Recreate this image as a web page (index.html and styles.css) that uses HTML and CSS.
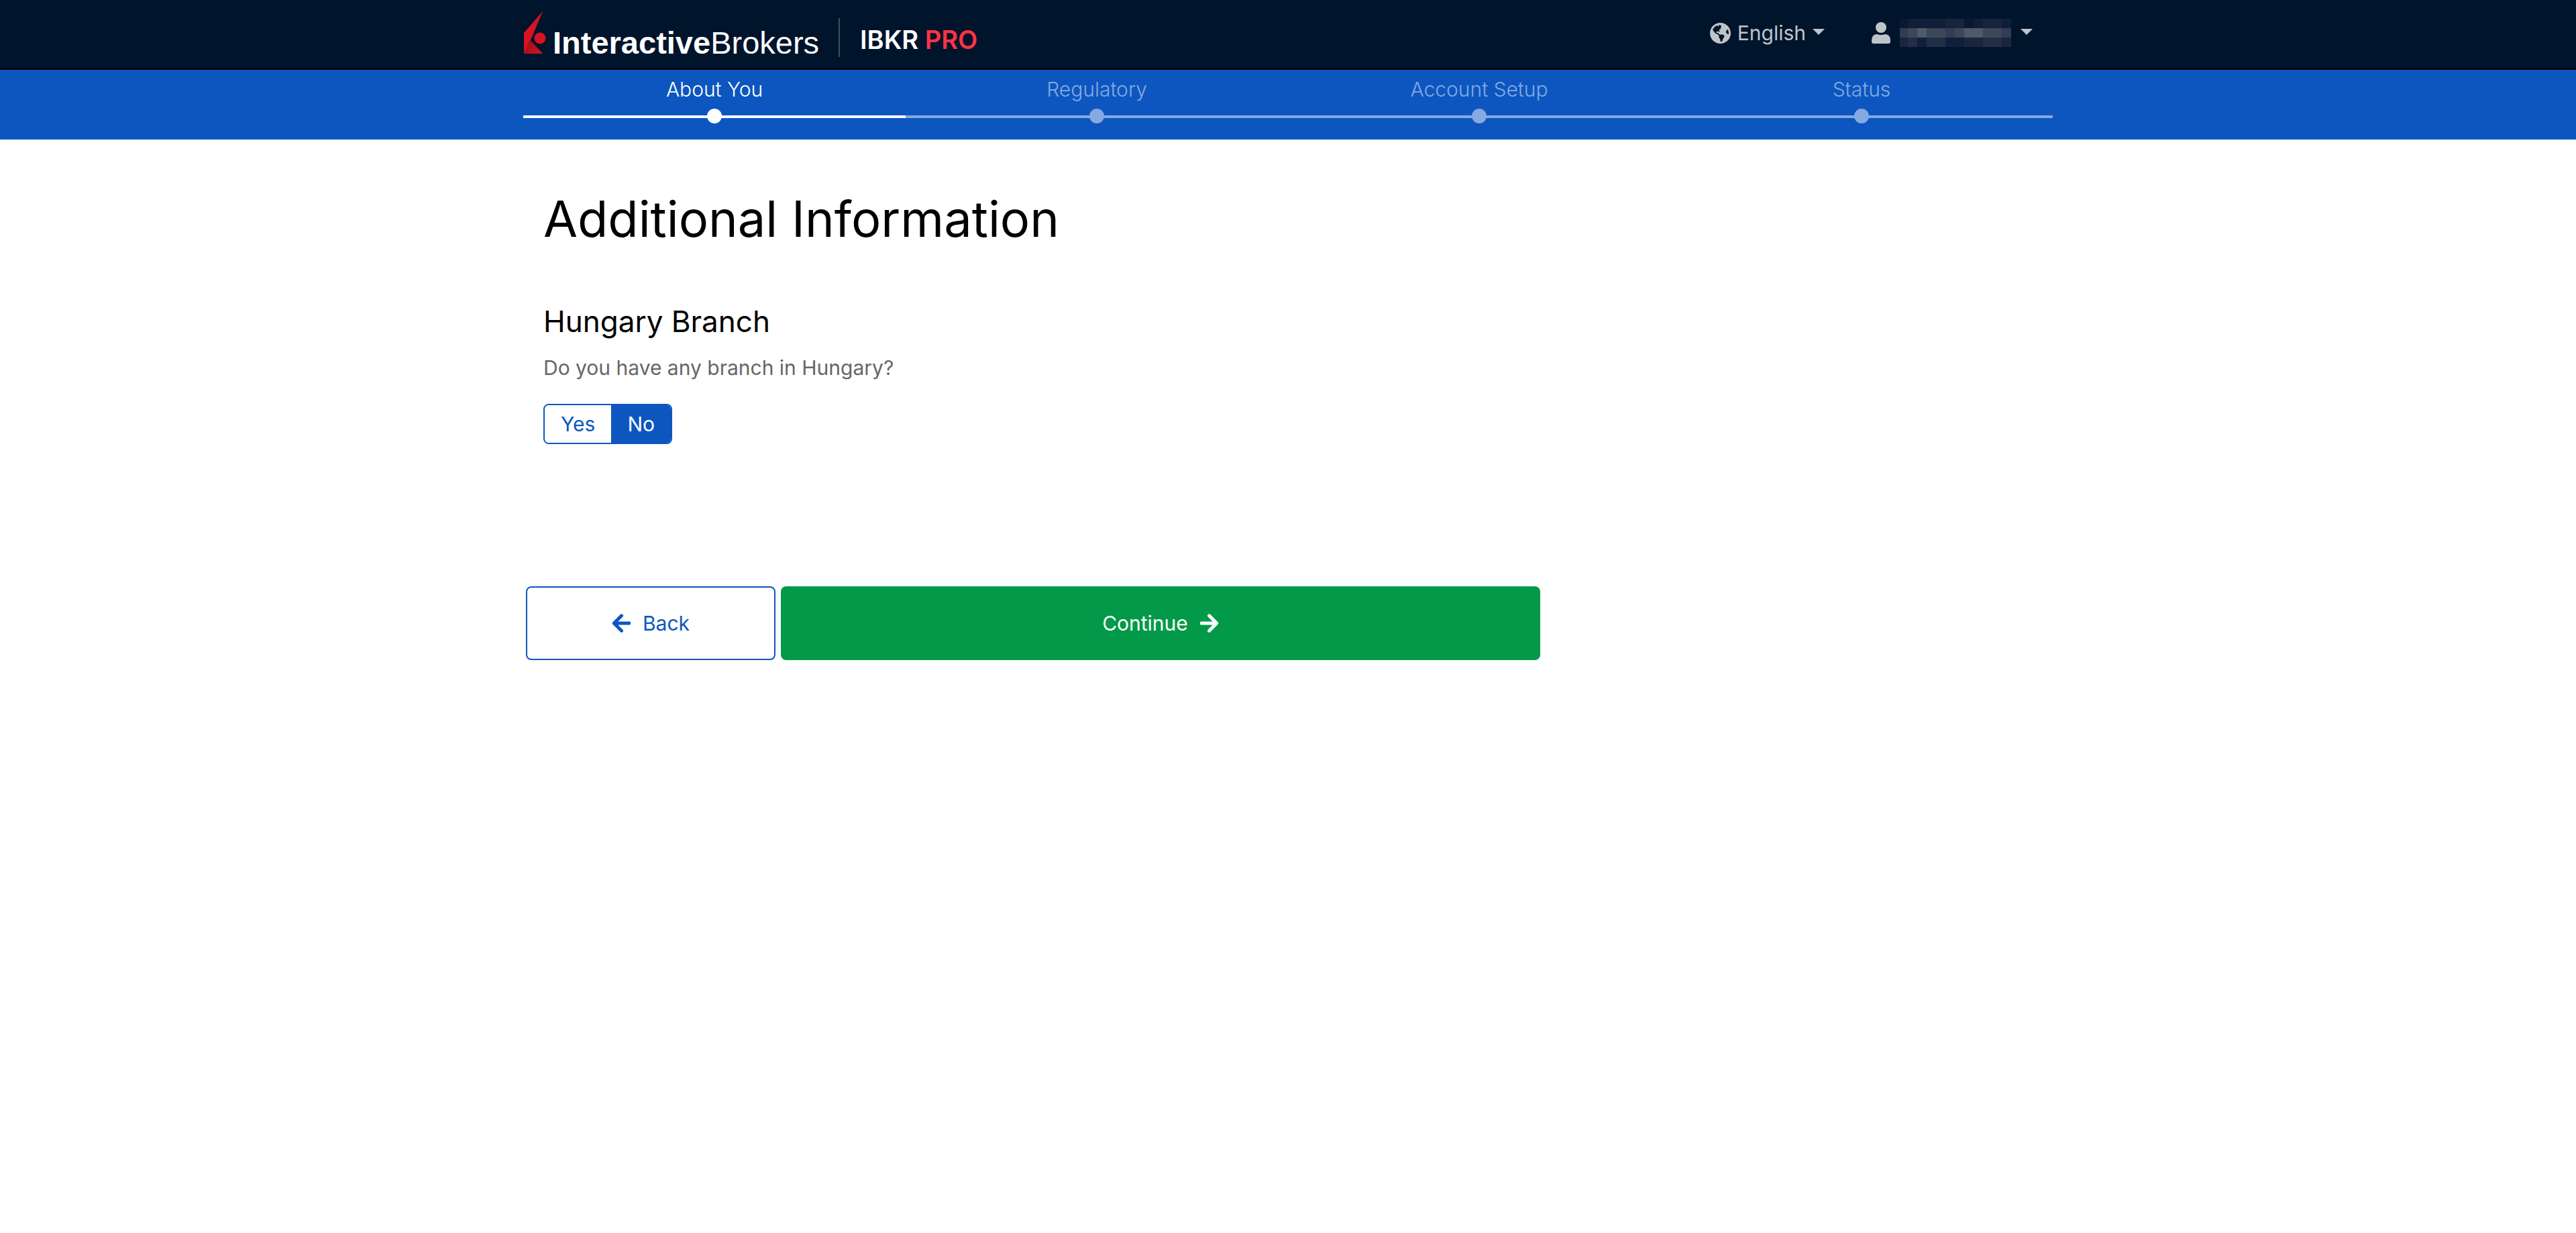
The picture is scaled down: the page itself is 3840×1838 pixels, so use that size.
FILE: index.html
```
<!DOCTYPE html>
<html lang="en">
<head>
<meta charset="utf-8">
<title>Additional Information</title>
<link rel="stylesheet" href="styles.css">
</head>
<body>
<header class="header">
  <div class="container header-row">
    <a class="logo" href="#" aria-label="InteractiveBrokers home">
      <svg class="logo-mark" viewBox="0 0 33 63" aria-hidden="true">
        <defs>
          <linearGradient id="fold" x1="0" y1="0" x2="1" y2="1">
            <stop offset="0" stop-color="#8d0f18"/>
            <stop offset="1" stop-color="#d81222"/>
          </linearGradient>
        </defs>
        <path d="M28 0 0 32v31l10-20z" fill="#d81222"/>
        <path d="M0 63 9 42l19 21z" fill="url(#fold)"/>
        <circle cx="24" cy="40" r="8.5" fill="#d81222"/>
      </svg>
      <span class="wordmark"><b>Interactive</b>Brokers</span>
    </a>
    <span class="product">IBKR <span class="product-tier">PRO</span></span>
    <nav class="menus" aria-label="Preferences">
      <button class="menu" type="button">
        <svg class="globe" viewBox="0 8 496 496" aria-hidden="true"><path fill="currentColor" d="M248 8C111.03 8 0 119.03 0 256s111.03 248 248 248 248-111.03 248-248S384.97 8 248 8zm82.29 357.6c-3.9 3.88-7.99 7.95-11.31 11.28-2.99 3-5.1 6.7-6.17 10.71-1.51 5.66-2.73 11.38-4.77 16.87l-17.39 46.85c-13.76 3-28 4.69-42.65 4.69v-27.38c1.69-12.62-7.64-36.26-22.63-51.25-6-6-9.37-14.14-9.37-22.63v-32.01c0-11.64-6.27-22.34-16.46-27.97-14.37-7.95-34.81-19.06-48.81-26.11-11.48-5.78-22.1-13.14-31.65-21.75l-.8-.72a114.792 114.792 0 0 1-18.06-20.74c-9.38-13.77-24.66-36.42-34.59-51.14 20.47-45.5 57.36-82.04 103.2-101.89l24.01 12.01C203.48 89.74 216 82.01 216 70.11v-11.3c7.99-1.29 16.12-2.11 24.39-2.42l28.3 28.3c6.25 6.25 6.25 16.38 0 22.63L264 112l-10.34 10.34c-3.12 3.12-3.12 8.19 0 11.31l4.69 4.69c3.12 3.12 3.12 8.19 0 11.31l-8 8a8.008 8.008 0 0 1-5.66 2.34h-8.99c-2.08 0-4.08.81-5.58 2.27l-9.92 9.65a8.008 8.008 0 0 0-1.58 9.31l15.59 31.19c2.66 5.32-1.21 11.58-7.15 11.58h-5.64c-1.93 0-3.79-.7-5.24-1.96l-9.28-8.06a16.017 16.017 0 0 0-15.55-3.1l-31.17 10.39a11.95 11.95 0 0 0-8.17 11.34c0 4.53 2.56 8.66 6.61 10.69l11.08 5.54c9.41 4.71 19.79 7.16 30.31 7.16s22.59 27.29 32 32h66.75c8.49 0 16.62 3.37 22.63 9.37l13.69 13.69a30.503 30.503 0 0 1 8.93 21.57 46.536 46.536 0 0 1-13.72 32.98zM417 274.25c-5.79-1.45-10.84-5-14.15-9.97l-17.98-26.97a23.97 23.97 0 0 1 0-26.62l19.59-29.38c2.32-3.47 5.5-6.29 9.24-8.15l12.98-6.49C440.2 193.59 448 223.87 448 256c0 8.67-.74 17.16-1.82 25.54L417 274.25z"/></svg>
        English
        <svg class="caret" viewBox="0 0 18 12" aria-hidden="true"><path d="M0 0h18L9 9z" fill="currentColor"/></svg>
      </button>
      <button class="menu menu-account" type="button" aria-label="Account">
        <svg class="person" viewBox="0 0 28 32" aria-hidden="true"><circle cx="14" cy="8" r="8" fill="currentColor"/><path d="M8 18q6 2 12 0 8 0 8 10v1q0 3-3 3H3q-3 0-3-3v-1q0-10 8-10z" fill="currentColor"/></svg>
        <svg class="masked" viewBox="0 0 166 42" shape-rendering="crispEdges" aria-hidden="true">
          <path fill="#101f39" d="M0 0h166v14H0z"/>
          <path fill="#18243d" d="M68 0h28v14H68zM124 0h28v14h-28z"/>
          <path fill="#0a1932" d="M0 0h12v14H0zM96 0h14v14H96z"/>
          <path fill="#3d475a" d="M0 14h166v14H0z"/>
          <path fill="#333c54" d="M0 14h12v14H0zM68 14h14v14H68zM152 14h14v14h-14z"/>
          <path fill="#4e596b" d="M26 14h14v14H26zM96 14h28v14H96z"/>
          <path fill="#1a263d" d="M0 28h166v14H0z"/>
          <path fill="#232e46" d="M12 28h14v14H12zM40 28h28v14H40zM124 28h28v14h-28z"/>
          <path fill="#10203a" d="M26 28h14v14H26zM68 28h28v14H68z"/>
        </svg>
        <svg class="caret" viewBox="0 0 18 12" aria-hidden="true"><path d="M0 0h18L9 9z" fill="currentColor"/></svg>
      </button>
    </nav>
  </div>
</header>

<nav class="progress" aria-label="Application progress">
  <ol class="container steps">
    <li class="step step-current" aria-current="step">About You<span class="track"></span></li>
    <li class="step">Regulatory<span class="track"></span></li>
    <li class="step">Account Setup<span class="track"></span></li>
    <li class="step">Status<span class="track"></span></li>
  </ol>
</nav>

<main class="container">
  <form class="form">
    <section class="content">
      <h1>Additional Information</h1>
      <h2>Hungary Branch</h2>
      <p class="question" id="branch-question">Do you have any branch in Hungary?</p>
      <div class="toggle" role="radiogroup" aria-labelledby="branch-question">
        <label class="option"><input type="radio" name="branch" value="yes">Yes</label>
        <label class="option"><input type="radio" name="branch" value="no" checked>No</label>
      </div>
    </section>
    <div class="actions">
      <button class="button button-back" type="button">
        <svg class="arrow" viewBox="0 0 28 28" aria-hidden="true"><path d="M14.500 2.800 3.300 14l11.200 11.200M4 14h22"/></svg>
        Back
      </button>
      <button class="button button-continue" type="submit">
        Continue
        <svg class="arrow" viewBox="0 0 28 28" aria-hidden="true"><path d="M13.500 2.800 24.700 14 13.500 25.200M24 14H2"/></svg>
      </button>
    </div>
  </form>
</main>
</body>
</html>
```
FILE: styles.css
```
* {
  box-sizing: border-box;
}

body {
  margin: 0;
  background: #fff;
  color: #000;
  font: 400 30px/36px Inter, "Liberation Sans", sans-serif;
}

h1,
h2,
p,
ol {
  margin: 0;
  padding: 0;
}

button {
  margin: 0;
  padding: 0;
  border: 0;
  background: none;
  color: inherit;
  font: inherit;
  cursor: pointer;
}

svg {
  display: block;
  flex: none;
}

.container {
  width: 100%;
  max-width: 2280px;
  margin: 0 auto;
}

/* Header */

.header {
  background: #00142b;
  border-bottom: 2px solid #000;
}

.header-row {
  display: flex;
  align-items: flex-start;
  padding: 17px 30px 15px 0;
}

.logo {
  display: flex;
  align-items: baseline;
  gap: 10px;
  height: 70px;
  color: #fff;
  text-decoration: none;
}

.logo-mark {
  width: 33px;
  height: 63px;
  margin-left: 1px;
}

.wordmark {
  font: 400 47px/46px "Liberation Sans", sans-serif;
}

.product {
  height: 58px;
  margin: 10px 0 0 29px;
  padding-left: 30px;
  border-left: 2px solid #404f60;
  color: #fff;
  font-size: 38px;
  font-weight: 600;
  line-height: 64px;
}

.product-tier {
  color: #ff3344;
}

.menus {
  display: flex;
  gap: 70px;
  margin: 14px 0 0 auto;
  color: #bfc4ca;
}

.menu {
  display: flex;
  align-items: center;
  gap: 10px;
  height: 36px;
}

.menu-account {
  gap: 14px;
}

.globe {
  width: 31px;
  height: 31px;
}

.caret {
  width: 18px;
  height: 12px;
}

.person {
  width: 28px;
  height: 32px;
}

.masked {
  width: 166px;
  height: 42px;
}

/* Progress steps */

.progress {
  background: #0d56c0;
}

.steps {
  display: grid;
  grid-template-columns: repeat(4, 1fr);
  padding: 11px 0 24px;
  list-style: none;
}

.step {
  --marker: #85a9e0;
  display: flex;
  flex-direction: column;
  gap: 11px;
  color: #85a9e0;
  font-weight: 300;
  text-align: center;
}

.step-current {
  --marker: #fff;
  color: #fff;
}

.track {
  display: flex;
  justify-content: center;
  background: linear-gradient(var(--marker), var(--marker)) 0 10px / 100% 4px no-repeat;
}

.track::before {
  content: "";
  width: 22px;
  height: 22px;
  border-radius: 50%;
  background: var(--marker);
}

/* Form */

.form {
  width: 66.6667%;
}

.content {
  padding: 74px 30px 0;
}

h1 {
  margin-bottom: 82px;
  font-size: 74px;
  font-weight: 400;
  line-height: 88px;
}

h2 {
  margin-bottom: 24px;
  font-size: 44px;
  font-weight: 400;
  line-height: 54px;
}

.question {
  margin-bottom: 36px;
  color: #666;
}

.toggle {
  display: flex;
  width: fit-content;
  overflow: hidden;
  border: 2px solid #0d56c0;
  border-radius: 8px;
}

.option {
  position: relative;
  padding: 10px 24px;
  background: #fff;
  color: #0d56c0;
  cursor: pointer;
}

.option:has(:checked) {
  background: #0d56c0;
  color: #fff;
}

.option input {
  position: absolute;
  inset: 0;
  margin: 0;
  opacity: 0;
}

.actions {
  display: grid;
  grid-template-columns: 1fr 3fr;
  margin-top: 212px;
}

.button {
  display: flex;
  align-items: center;
  justify-content: center;
  gap: 18px;
  height: 110px;
  margin: 0 4px;
  border-radius: 8px;
}

.button-back {
  border: 2px solid #0d56c0;
  color: #0d56c0;
}

.button-continue {
  background: #029a49;
  color: #fff;
}

.arrow {
  width: 28px;
  height: 28px;
  fill: none;
  stroke: currentColor;
  stroke-width: 5;
  stroke-linecap: round;
  stroke-linejoin: round;
}
```
